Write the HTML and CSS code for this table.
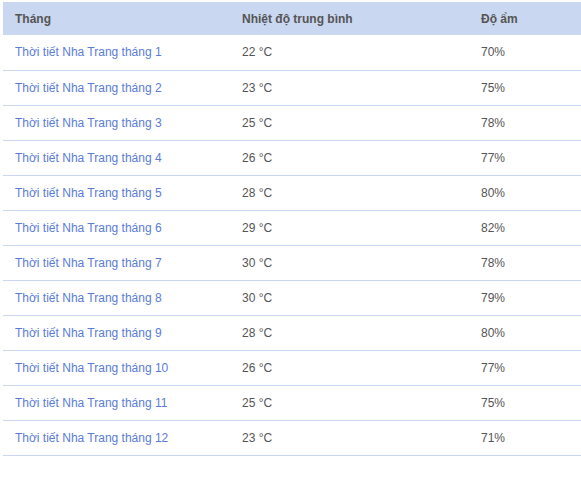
FILE: index.html
```html
<!DOCTYPE html>
<html lang="vi">
<head>
<meta charset="utf-8">
<link rel="stylesheet" href="styles.css">
</head>
<body>
<div class="wrap">
<table class="weather">
  <colgroup><col class="c1"><col class="c2"><col class="c3"></colgroup>
  <thead>
    <tr><th>Tháng</th><th>Nhiệt độ trung bình</th><th>Độ ẩm</th></tr>
  </thead>
  <tbody>
    <tr><td><a href="#">Thời tiết Nha Trang tháng 1</a></td><td>22 °C</td><td>70%</td></tr>
    <tr><td><a href="#">Thời tiết Nha Trang tháng 2</a></td><td>23 °C</td><td>75%</td></tr>
    <tr><td><a href="#">Thời tiết Nha Trang tháng 3</a></td><td>25 °C</td><td>78%</td></tr>
    <tr><td><a href="#">Thời tiết Nha Trang tháng 4</a></td><td>26 °C</td><td>77%</td></tr>
    <tr><td><a href="#">Thời tiết Nha Trang tháng 5</a></td><td>28 °C</td><td>80%</td></tr>
    <tr><td><a href="#">Thời tiết Nha Trang tháng 6</a></td><td>29 °C</td><td>82%</td></tr>
    <tr><td><a href="#">Thời tiết Nha Trang tháng 7</a></td><td>30 °C</td><td>78%</td></tr>
    <tr><td><a href="#">Thời tiết Nha Trang tháng 8</a></td><td>30 °C</td><td>79%</td></tr>
    <tr><td><a href="#">Thời tiết Nha Trang tháng 9</a></td><td>28 °C</td><td>80%</td></tr>
    <tr><td><a href="#">Thời tiết Nha Trang tháng 10</a></td><td>26 °C</td><td>77%</td></tr>
    <tr><td><a href="#">Thời tiết Nha Trang tháng 11</a></td><td>25 °C</td><td>75%</td></tr>
    <tr><td><a href="#">Thời tiết Nha Trang tháng 12</a></td><td>23 °C</td><td>71%</td></tr>
  </tbody>
</table>
<p class="after">Nhìn chung</p>
</div>
</body>
</html>
```
FILE: styles.css
```css
html, body {
  margin: 0;
  padding: 0;
  background: #fff;
}
body {
  font-family: "Liberation Sans", Arial, sans-serif;
  font-size: 12px;
  color: #555;
  overflow: hidden;
}
.wrap {
  padding: 2px 0 0 3px;
}
.weather {
  border-collapse: collapse;
  width: 590px;
  table-layout: fixed;
}
.c1 { width: 227px; }
.c2 { width: 239px; }
.weather th {
  background: #c9d7f0;
  color: #555;
  font-weight: bold;
  text-align: left;
  height: 33px;
  padding: 0 12px;
  box-sizing: border-box;
}
.weather td {
  height: 35px;
  padding: 0 12px;
  box-sizing: border-box;
  border-bottom: 1px solid #c9d7f0;
  color: #555;
}
.weather a {
  color: #5a7cd7;
  text-decoration: none;
}
.after {
  margin: 27px 0 0 12px;
  font-size: 12px;
  line-height: 14px;
  color: #555;
}
```
